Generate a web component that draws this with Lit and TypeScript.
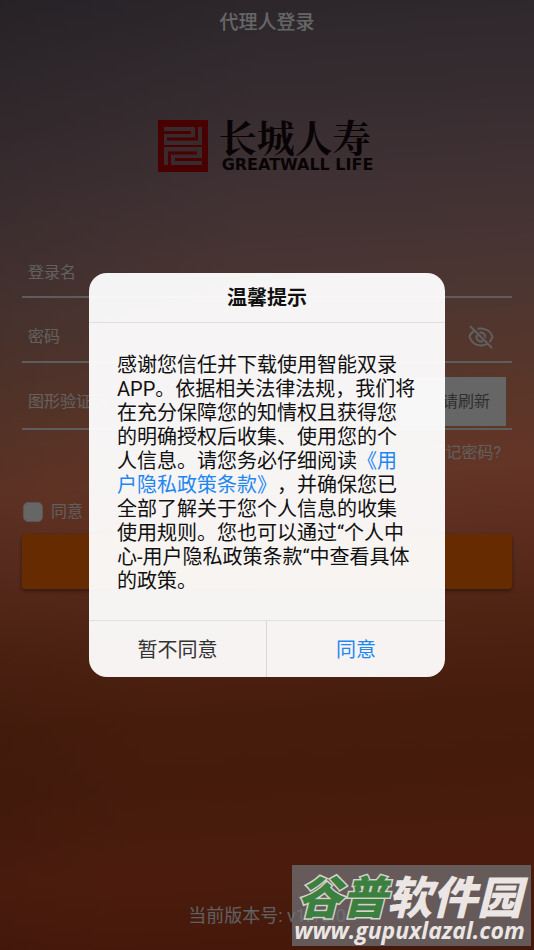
import { LitElement, html, css } from "lit";
import { customElement, state } from "lit/decorators.js";

@customElement("brand-logo")
class BrandLogo extends LitElement {
  static styles = css`
    :host { display: flex; align-items: center; gap: 11px; }
    .seal { width: 50px; height: 52px; flex: none; }
    .words { display: flex; flex-direction: column; color: #150c0e; }
    .cn {
      display: flex; justify-content: space-between;
      font: 700 38px/38px "Noto Serif CJK SC", "Noto Sans CJK SC", sans-serif;
    }
    .en { font: 700 16px/20px "DejaVu Sans", sans-serif; padding: 0 3px; white-space: nowrap; }
  `;
  render() {
    return html`
      <svg class="seal" viewBox="0 0 50 52" aria-hidden="true">
        <rect width="50" height="52" fill="#b40000" />
        <path d="M6 7H44V25H6ZM6 27H44V45H6Z" fill="#8d6a72" />
        <g fill="none" stroke="#b40000" stroke-width="3">
          <path d="M6 12.500H33" />
          <path d="M9 19H38.500V7" />
          <path d="M39 33H11.500V45" />
          <path d="M17 39.500H44" />
        </g>
      </svg>
      <div class="words"><span class="cn">长城人寿</span><span class="en">GREATWALL LIFE</span></div>
    `;
  }
}

@customElement("privacy-dialog")
class PrivacyDialog extends LitElement {
  static styles = css`
    :host { display: block; width: 356px; max-width: 90%; }
    .dialog {
      border-radius: 18px; overflow: hidden; background: rgba(255, 255, 255, 0.95);
      font: 20px/24px Roboto, "Noto Sans CJK SC", sans-serif; color: #111;
      text-spacing-trim: space-all;
    }
    h2 {
      margin: 0; padding: 13px 0 12px; font-size: 20px; line-height: 24px; font-weight: 700;
      text-align: center; border-bottom: 1px solid #e0dfde;
    }
    p { margin: 0; padding: 30px 29px 27px 28px; }
    a { color: #1e88f0; text-decoration: none; }
    .actions { display: grid; grid-template-columns: 1fr 1fr; border-top: 1px solid #e0dfde; }
    button {
      font: inherit; color: #333; background: none; border: 0; padding: 17px 0 15px; cursor: pointer;
    }
    .decline { border-right: 1px solid #d8d7d6; }
    .agree { color: #1e88f0; }
  `;
  render() {
    return html`
      <div class="dialog" role="dialog" aria-modal="true" aria-labelledby="title">
        <h2 id="title">温馨提示</h2>
        <p>感谢您信任并下载使用智能双录APP。依据相关法律法规，我们将在充分保障您的知情权且获得您的明确授权后收集、使用您的个人信息。请您务必仔细阅读<a href="#privacy">《用户隐私政策条款》</a>，并确保您已全部了解关于您个人信息的收集使用规则。您也可以通过“个人中心-用户隐私政策条款“中查看具体的政策。</p>
        <div class="actions">
          <button type="button" class="decline">暂不同意</button>
          <button type="button" class="agree">同意</button>
        </div>
      </div>
    `;
  }
}

@customElement("site-badge")
class SiteBadge extends LitElement {
  static styles = css`
    :host {
      display: flex; flex-direction: column; align-items: center; width: 239px;
      padding: 7px 4px 3px 0; box-sizing: border-box; background: rgba(114, 118, 122, 0.7);
      color: #ebe5e3; white-space: nowrap;
    }
    .name { font: italic 900 45px/45px "Noto Sans CJK SC", sans-serif; }
    .green { color: #3c8040; paint-order: stroke fill; -webkit-text-stroke: 3px #d5d2cc; }
    .url { font: italic 700 23px/26px "Open Sans", sans-serif; }
  `;
  render() {
    return html`
      <span class="name"><span class="green">谷普</span>软件园</span>
      <span class="url">www.gupuxlazal.com</span>
    `;
  }
}

@customElement("app-root")
class AppRoot extends LitElement {
  static styles = css`
    :host {
      display: block; position: relative; min-height: 100vh;
      font: 16px/24px Roboto, "Noto Sans CJK SC", sans-serif; color: #fff;
    }
    * { box-sizing: border-box; }
    .page {
      min-height: 100vh; display: flex; flex-direction: column; padding: 0 22px 22px;
      background:
        linear-gradient(100deg, rgba(0, 0, 0, 0.1), rgba(0, 0, 0, 0) 40%),
        linear-gradient(176deg, #6b5f6b 0%, #856e78 11%, #a07b82 21%, #bc877d 32%, #e08767 43%,
          #f88660 50%, #e4704c 58%, #c4582f 66%, #b04820 74%, #ac4520 81%, #bc4824 90%, #a83a19 100%);
    }
    h1 { margin: 0; padding: 11px 0 9px; font-size: 19px; line-height: 24px; font-weight: 500; text-align: center; }
    brand-logo { margin: 73px auto 73px; }
    form { display: flex; flex-direction: column; }
    .field {
      display: flex; align-items: center; height: 65px; padding: 14px 6px 0;
      border-bottom: 2px solid #e8e8e8;
    }
    .field.first { height: 50px; padding-top: 0; }
    .field.code { height: 67px; padding-top: 12px; }
    input.text {
      flex: 1; min-width: 0; background: none; border: 0; outline: 0; padding: 0;
      height: 32px; font: inherit; color: inherit;
    }
    input.text::placeholder { color: #fff; opacity: 0.9; }
    .eye, .refresh { border: 0; padding: 0; background: none; color: #f0f0f0; font: inherit; cursor: pointer; }
    .eye { height: 28px; margin-right: 11px; }
    .eye svg { display: block; width: 28px; height: 28px; }
    .refresh {
      display: flex; align-items: center; gap: 10px; height: 49px; padding: 0 16px 0 8px;
      background: #fff; color: #777;
    }
    .refresh svg { width: 24px; height: 24px; }
    .forgot { align-self: flex-end; margin: 11px 11px 0 0; color: #eee; text-decoration: none; }
    .agree { display: flex; align-items: center; gap: 8px; margin-top: 35px; color: #eee; }
    .agree input {
      appearance: none; width: 20px; height: 20px; margin: 0 0 0 1px; background: #fff;
      border: 1px solid #ddd; border-radius: 5px;
    }
    .login {
      height: 55px; margin-top: 10px; border: 0; border-radius: 3px; background: #ff6e00; color: #fff;
      font: inherit; box-shadow: 0 2px 4px rgba(0, 0, 0, 0.4);
    }
    .version { margin: auto 0 0; font-size: 18px; line-height: 24px; text-align: center; color: #eee; }
    .mask {
      position: absolute; inset: 0; display: flex; align-items: center; justify-content: center;
      background: rgba(0, 0, 0, 0.6);
    }
    site-badge { position: absolute; right: 3px; bottom: 4px; }
  `;

  @state() private agreed = false;

  render() {
    return html`
      <main class="page">
        <h1>代理人登录</h1>
        <brand-logo></brand-logo>
        <form>
          <div class="field first"><input class="text" aria-label="登录名" placeholder="登录名" /></div>
          <div class="field">
            <input class="text" type="password" aria-label="密码" placeholder="密码" />
            <button class="eye" type="button" aria-label="显示密码">
              <svg viewBox="0 0 28 28" fill="none" stroke="currentColor" stroke-width="2">
                <path d="M8 7.500A12 9 0 0 0 2.500 14C4.500 19.500 9 22.500 14 22.500Q17.500 22.500 20 21" />
                <path d="M10.500 5.800Q12 5.500 14 5.500C19.500 5.500 24 9 25.500 14Q24.500 17 22.500 19" />
                <path d="M10 12A4.500 4.500 0 0 0 16 18M12.500 9.800A4.500 4.500 0 0 1 18.300 15" />
                <path d="M3 3L25 25" />
              </svg>
            </button>
          </div>
          <div class="field code">
            <input class="text" aria-label="图形验证码" placeholder="图形验证码" />
            <button class="refresh" type="button">
              <svg viewBox="0 0 24 24" fill="none" stroke="#fff" stroke-width="2" aria-hidden="true">
                <path d="M4 10A8 8 0 0 1 19 8V4M20 14A8 8 0 0 1 5 16V20" />
              </svg>
              请刷新
            </button>
          </div>
          <a class="forgot" href="#forgot">忘记密码?</a>
          <label class="agree">
            <input type="checkbox" .checked=${this.agreed}
              @change=${(e: Event) => (this.agreed = (e.target as HTMLInputElement).checked)} />同意
          </label>
          <button class="login" type="button" aria-label="登录"></button>
        </form>
        <p class="version">当前版本号: v1.18.0</p>
      </main>
      <div class="mask"><privacy-dialog></privacy-dialog></div>
      <site-badge></site-badge>
    `;
  }
}
